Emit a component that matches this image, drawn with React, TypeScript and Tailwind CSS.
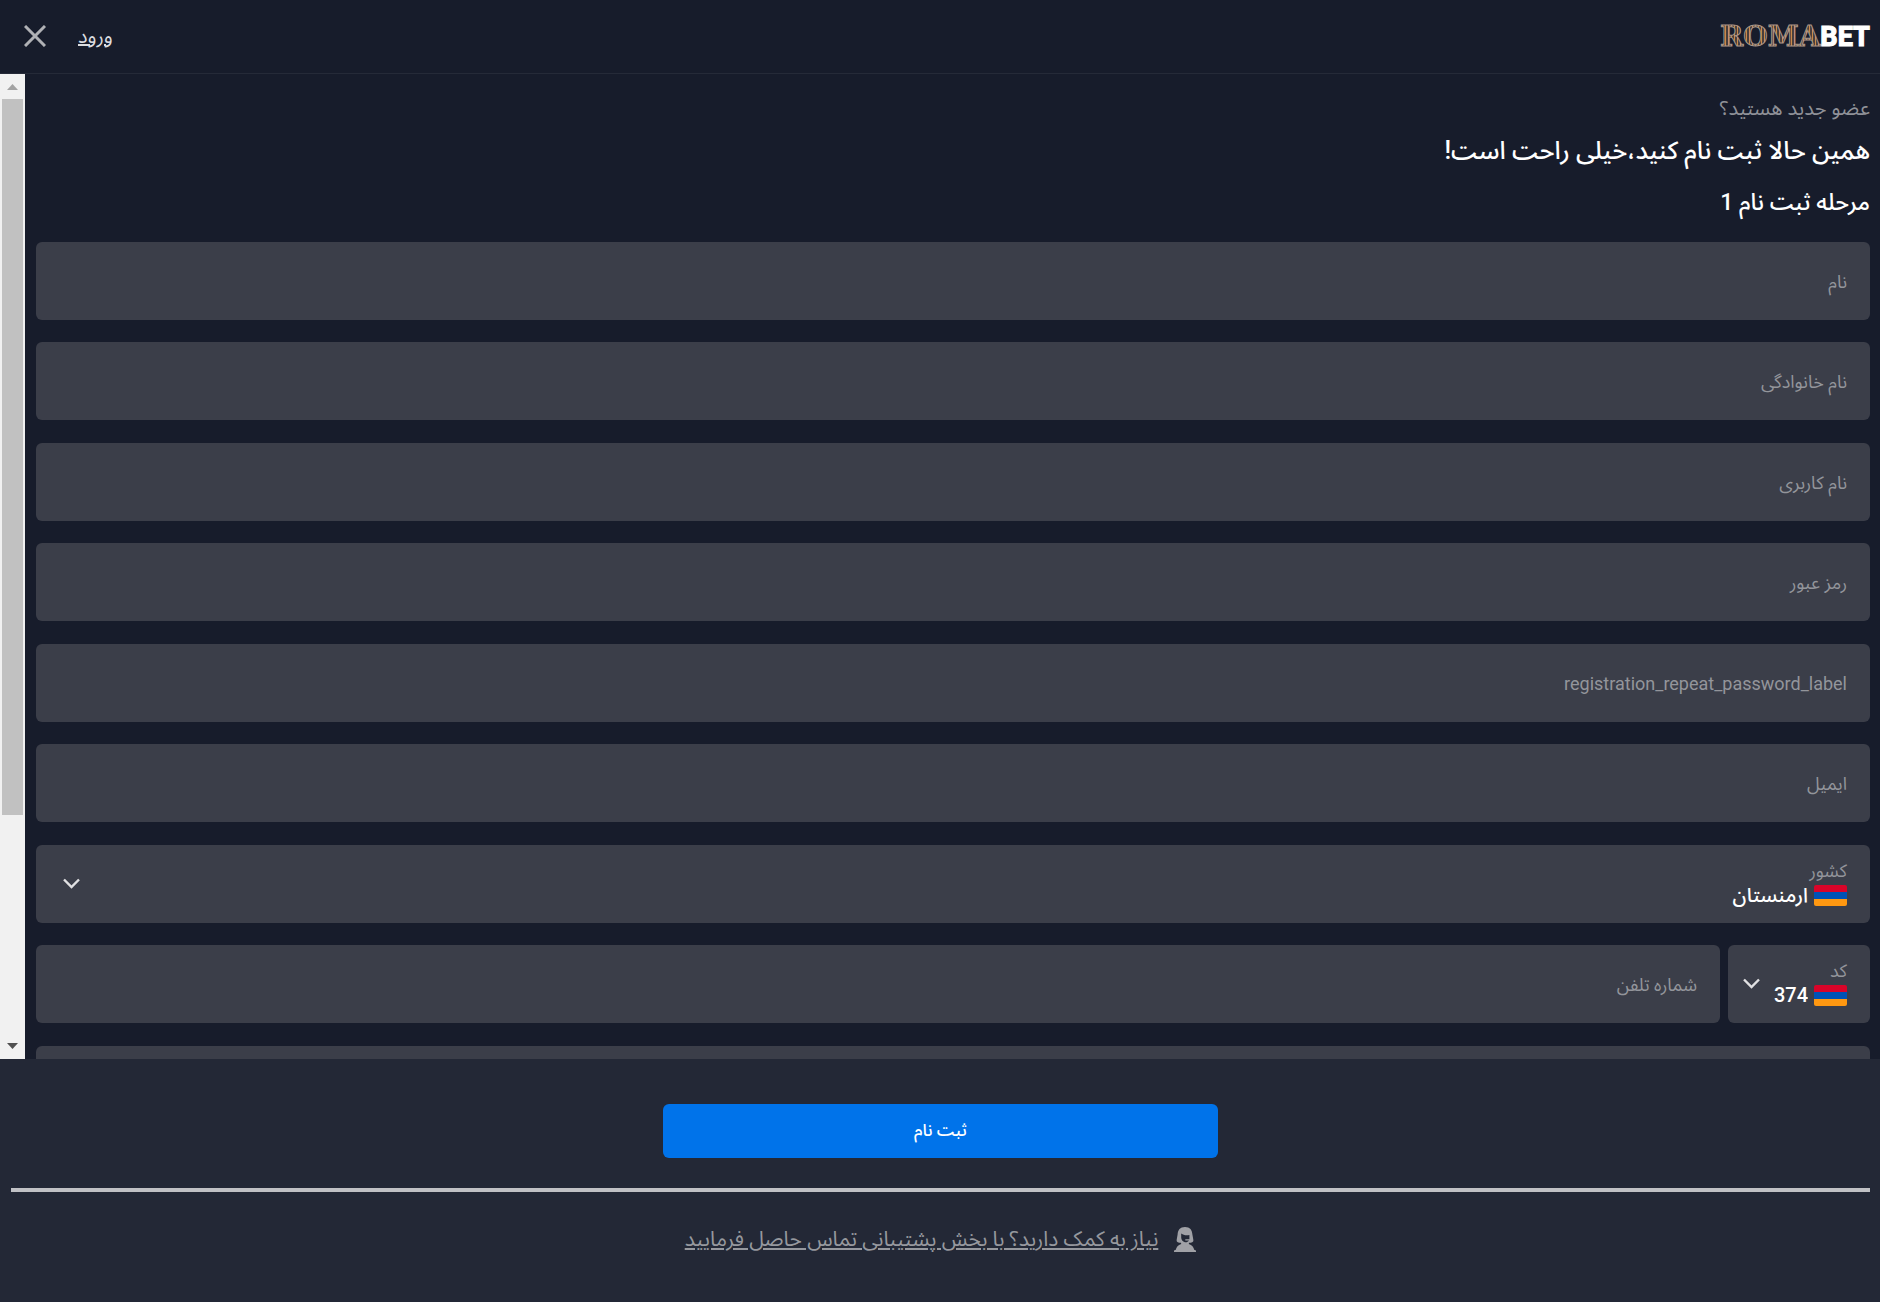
import { useState } from "react";
import type { FormEvent, ReactNode } from "react";

const fieldBox = "flex h-[78px] rounded-md bg-[#3b3e49] pr-[23px]";

const countries = [{ code: "374", name: "ارمنستان" }];

function Logo() {
  return (
    <a href="#" aria-label="ROMABET" dir="ltr">
      <svg width="152" height="44" viewBox="0 0 152 44">
        <defs>
          <pattern id="columns" width="3" height="3" patternUnits="userSpaceOnUse">
            <rect width="3" height="3" fill="#4a3f3c" />
            <rect width="1" height="3" fill="#c98a4a" />
          </pattern>
        </defs>
        <text
          x="1"
          y="32"
          fill="url(#columns)"
          stroke="#a8968a"
          strokeWidth="1"
          className="font-['DejaVu_Serif',serif] text-[28px] font-bold"
        >
          ROMA
        </text>
        <text
          x="151"
          y="32"
          textAnchor="end"
          fill="#ffffff"
          stroke="#ffffff"
          strokeWidth="1"
          className="font-[Roboto,sans-serif] text-[27px] font-extrabold"
        >
          BET
        </text>
      </svg>
    </a>
  );
}

function Chevron() {
  return (
    <svg width="17" height="11" viewBox="0 0 17 11" fill="none" stroke="#e1e1e3" strokeWidth="2.4" aria-hidden="true">
      <path d="M1 1.500 8.500 9 16 1.500" />
    </svg>
  );
}

function Flag() {
  return (
    <svg width="33" height="21" viewBox="0 0 33 21" aria-hidden="true" className="shrink-0 rounded-xs">
      <rect width="33" height="7" fill="#d90429" />
      <rect y="7" width="33" height="7" fill="#0052b4" />
      <rect y="14" width="33" height="7" fill="#ff9811" />
    </svg>
  );
}

function SupportIcon() {
  return (
    <svg width="22" height="25" viewBox="0 0 22 25" fill="#a0a1a6" aria-hidden="true">
      <path
        fillRule="evenodd"
        d="M11 0C6 0 3.800 3 3.600 7.500L2.600 13.200C2.400 15 4.500 15.800 7 15.800L7.200 17C4 18.200 2.300 20 1.800 22.800L0 23.400V25H22V23.400L20.200 22.800C19.700 20 18 18.200 14.800 17L15 15.800C17.500 15.800 19.600 15 19.400 13.200L18.400 7.500C18.200 3 16 0 11 0ZM7.200 6.500C9.500 8.200 12 8.600 15.400 8V12.200H11.300V13.500H15C14 15 12.300 15.600 11 15.200C8.600 14.600 7.200 12.800 7.200 10.500Z"
      />
    </svg>
  );
}

function TextField({ id, label, type = "text" }: { id: string; label: string; type?: string }) {
  return (
    <div className={`${fieldBox} min-w-0 flex-1 shrink-0 basis-[78px] items-center gap-4 pt-[2px] pl-[23px]`}>
      <label htmlFor={id} className="text-lg text-[#93959b]">
        {label}
      </label>
      <input id={id} type={type} className="h-full min-w-0 flex-1 bg-transparent text-lg text-white outline-none" />
    </div>
  );
}

type SelectFieldProps = { id: string; label: string; className: string; children: ReactNode };

function SelectField({ id, label, className, children }: SelectFieldProps) {
  return (
    <div className={`${fieldBox} ${className} items-center justify-between pb-[2px]`}>
      <div className="min-w-0">
        <label htmlFor={id} className="block text-lg leading-6 text-[#93959b]">
          {label}
        </label>
        <div className="flex h-6 items-center gap-[6px]">
          <Flag />
          <select id={id} className="appearance-none bg-transparent text-xl leading-6 font-medium text-white outline-none">
            {children}
          </select>
        </div>
      </div>
      <Chevron />
    </div>
  );
}

function ScrollRail() {
  return (
    <div className="flex w-[25px] shrink-0 flex-col bg-[#f1f1f1]" aria-hidden="true">
      <svg width="25" height="25" viewBox="0 0 25 25" fill="#a3a3a3" className="shrink-0">
        <path d="M7 16 12.500 10 18 16Z" />
      </svg>
      <div className="flex-1 px-[2px]">
        <div className="h-[76.6%] bg-[#c1c1c1]" />
      </div>
      <svg width="25" height="25" viewBox="0 0 25 25" fill="#505050" className="shrink-0">
        <path d="M7 9 12.500 15 18 9Z" />
      </svg>
    </div>
  );
}

export default function App() {
  const [sent, setSent] = useState(false);

  const submit = (event: FormEvent<HTMLFormElement>) => {
    event.preventDefault();
    setSent(true);
  };

  return (
    <form
      dir="rtl"
      onSubmit={submit}
      className="flex h-screen flex-col bg-[#171c2b] font-[Roboto,'Noto_Sans_Arabic','Noto_Sans',sans-serif] text-white"
    >
      <header className="flex h-[74px] shrink-0 items-center justify-between border-b border-[#252a38] pr-[9px] pb-[2px] pl-6">
        <Logo />
        <div className="flex items-center gap-8">
          <a href="#login" className="text-xl text-[#dcdde0] underline">
            ورود
          </a>
          <button type="button" aria-label="بستن">
            <svg width="22" height="22" viewBox="0 0 22 22" stroke="#b0b1b5" strokeWidth="3" aria-hidden="true">
              <path d="M1 1 21 21M21 1 1 21" />
            </svg>
          </button>
        </div>
      </header>

      <div className="flex min-h-0 flex-1">
        <main className="min-w-0 flex-1 overflow-y-auto pt-4 pr-[10px] pl-[11px] [scrollbar-width:none]">
          <p className="text-xl leading-9 text-[#8f9198]">عضو جدید هستید؟</p>
          <h1 className="text-[25px] leading-[50px] font-medium">همین حالا ثبت نام کنید،خیلی راحت است!</h1>
          <h2 className="mb-3 text-[23px] leading-[54px] font-medium">مرحله ثبت نام 1</h2>

          <div className="flex flex-col gap-[23px] pb-6">
            <div className="flex flex-col gap-[22px]">
              <TextField id="first-name" label="نام" />
              <TextField id="last-name" label="نام خانوادگی" />
            </div>
            <div className="flex flex-col gap-[22px]">
              <TextField id="username" label="نام کاربری" />
              <TextField id="password" label="رمز عبور" type="password" />
            </div>
            <div className="flex flex-col gap-[22px]">
              <TextField id="repeat-password" label="registration_repeat_password_label" type="password" />
              <TextField id="email" label="ایمیل" type="email" />
            </div>
            <div className="flex flex-col gap-[22px]">
              <SelectField id="country" label="کشور" className="pl-[27px]">
                {countries.map((country) => (
                  <option key={country.code}>{country.name}</option>
                ))}
              </SelectField>
              <div className="flex gap-2">
                <SelectField id="phone-code" label="کد" className="w-[142px] pl-[15px]">
                  {countries.map((country) => (
                    <option key={country.code}>{country.code}</option>
                  ))}
                </SelectField>
                <TextField id="phone" label="شماره تلفن" type="tel" />
              </div>
            </div>
            <div className={fieldBox} />
          </div>
        </main>
        <ScrollRail />
      </div>

      <footer className="shrink-0 bg-[#232836] pt-[45px] pr-[10px] pb-10 pl-[11px] text-center">
        <button
          type="submit"
          disabled={sent}
          className="h-[54px] w-[555px] max-w-full rounded-md bg-[#0073ea] text-[17px] font-medium text-white"
        >
          ثبت نام
        </button>
        <hr className="mt-[30px] h-1 border-0 bg-[#c0c1c5]" />
        <a href="#support" className="mt-6 flex items-center justify-center gap-4 text-[21px] leading-[46px] text-[#96989e]">
          <SupportIcon />
          <span className="underline">نیاز به کمک دارید؟ با بخش پشتیبانی تماس حاصل فرمایید</span>
        </a>
      </footer>
    </form>
  );
}
